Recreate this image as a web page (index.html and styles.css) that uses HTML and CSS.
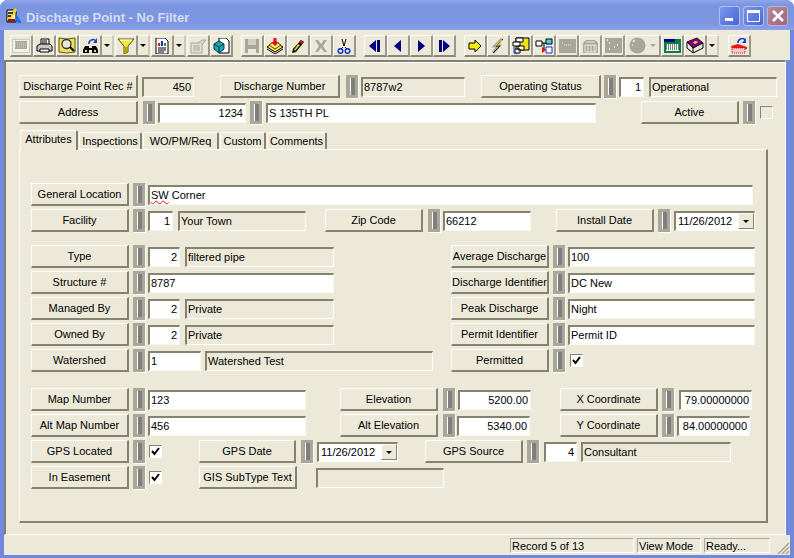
FILE: index.html
```html
<!DOCTYPE html>
<html>
<head>
  <title>Discharge Point - No Filter</title>
  <link rel="stylesheet" href="styles.css">
</head>
<body>
  <div class="window">
    <div class="titlebar">
      <svg class="app-icon" width="18" height="18" viewBox="0 0 18 18">
        <path d="M2 3h9v12H2z" fill="#f4f0c8" stroke="#000"/>
        <path d="M3 13L11 2" stroke="#e8d820" stroke-width="3"/>
        <path d="M3 6h5M3 9h3" stroke="#000" stroke-width="1.5"/>
        <path d="M3 12h7v3H3z" fill="#8c1c1c"/>
        <path d="M11 8l5 8M11 11l3 5" stroke="#1c70f0" stroke-width="1.6" fill="none"/>
      </svg>
      <span class="title-text">Discharge Point - No Filter</span>
      <div class="title-buttons">
        <div class="caption-btn"><span class="min-glyph"></span></div>
        <div class="caption-btn"><span class="max-glyph"></span></div>
        <div class="caption-btn caption-close">
          <svg width="14" height="14" viewBox="0 0 14 14"><path d="M2 2l10 10M12 2L2 12" stroke="#fff" stroke-width="2.6"/></svg>
        </div>
      </div>
    </div>

    <div class="toolbar">
      <div class="tb"><svg width="18" height="16" viewBox="0 0 18 16"><rect x="0.500" y="1.500" width="17" height="13" fill="#f4f2e6" stroke="#a8a698" stroke-dasharray="1 1"/><rect x="3" y="3" width="12" height="8" fill="#a8a698"/><path d="M3 5h12M3 7h12M3 9h12" stroke="#d8d6c8" stroke-dasharray="1 1"/></svg></div>
      <div class="tb"><svg width="17" height="16" viewBox="0 0 17 16"><path d="M5 1h8v6H5z" fill="#fff" stroke="#000"/><path d="M1 8l3-2h10l2 2v5H1z" fill="#c8c8c0" stroke="#000"/><path d="M4 11h9v3H4z" fill="#fff" stroke="#000"/><path d="M6 3h5M6 5h5" stroke="#000"/></svg></div>
      <div class="tb"><svg width="18" height="17" viewBox="0 0 18 17"><path d="M1 1l8 1 8-1v14l-8 1-8-1z" fill="#f0e060" stroke="#605800"/><circle cx="8.500" cy="7" r="4.500" fill="#e8e8dc" stroke="#303030" stroke-width="1.300"/><path d="M12 10l4 4" stroke="#000" stroke-width="2"/></svg></div>
      <div class="tb"><svg width="17" height="16" viewBox="0 0 17 16"><path d="M3 8h4v7H1v-3zM10 8h4l2 4v3h-6z" fill="#000"/><path d="M7 10h3v2H7z" fill="#000"/><path d="M3 12h2v2H3zM12 12h2v2h-2z" fill="#f0e060"/><path d="M7 6a4 4 0 0 1 7-3" stroke="#2040c0" stroke-width="1.6" fill="none"/><path d="M15 0v5h-4z" fill="#2040c0"/></svg></div>
      <div class="tb-arrow"><span class="caret"></span></div>
      <div class="tb tb-after"><svg width="18" height="16" viewBox="0 0 18 16"><path d="M1 1h16l-6 7v6l-4 2V8z" fill="#f4e840" stroke="#605800"/><path d="M3 2h12" stroke="#fff"/><path d="M8 9h2v5H8z" fill="#b0a000"/></svg></div>
      <div class="tb-arrow"><span class="caret"></span></div>
      <div class="tb tb-after"><svg width="16" height="16" viewBox="0 0 16 16"><path d="M2 0h9l3 3v13H2z" fill="#fff" stroke="#000"/><path d="M4 5h2v3H4z" fill="#e01010"/><path d="M7 3h2v5H7z" fill="#1030d0"/><path d="M10 5h2v3h-2z" fill="#10a030"/><path d="M4 10h8M4 12h8M4 14h6" stroke="#000"/></svg></div>
      <div class="tb-arrow"><span class="caret"></span></div>
      <div class="tb tb-after"><svg width="17" height="16" viewBox="0 0 17 16"><path d="M1 5h11v10H1z" fill="#e4e2d4" stroke="#a8a698"/><path d="M3 8h7M3 10h7M3 12h7" stroke="#a8a698"/><path d="M8 5l4-3h4l-4 5" fill="#d4d2c4" stroke="#a8a698"/></svg></div>
      <div class="tb"><svg width="17" height="16" viewBox="0 0 17 16"><path d="M6 0h7l3 3v12H6z" fill="#fff" stroke="#000"/><path d="M1 6l5-3 5 3v5l-5 4-5-4z" fill="#18a8b8" stroke="#003840"/><path d="M1 6l5 3 5-3M6 9v6" stroke="#003840" fill="none"/></svg></div>

      <div class="tb tb-group"><svg width="16" height="16" viewBox="0 0 16 16"><path d="M1 1h14v14H1z" fill="#a8a698"/><path d="M4 1h8v6H4z" fill="#d0cec0"/><path d="M4 11h8v4H4z" fill="#eceada"/></svg></div>
      <div class="tb"><svg width="18" height="16" viewBox="0 0 18 16"><path d="M1 9l8-5 8 5-8 5z" fill="#f4e840" stroke="#000"/><path d="M1 11l8 5 8-5" fill="none" stroke="#000"/><path d="M3 7l6-4 6 4-6 4z" fill="#f8ec70" stroke="#604000"/><path d="M7.5 0h3v4H13L9 8 5 4h2.500z" fill="#e01010"/></svg></div>
      <div class="tb"><svg width="16" height="16" viewBox="0 0 16 16"><path d="M11 2l3 2-8 10-4 1 1-4z" fill="#000"/><path d="M11 2l3 2-2 2-3-2z" fill="#c02020"/><path d="M8 6l2 1-5 6-1-1z" fill="#f0c820"/></svg></div>
      <div class="tb"><svg width="16" height="16" viewBox="0 0 16 16"><path d="M2 2h3l3 4 3-4h3l-4 6 4 6h-3l-3-4-3 4H2l4-6z" fill="#a8a698"/></svg></div>
      <div class="tb"><svg width="16" height="16" viewBox="0 0 16 16"><path d="M6 1l2 7 2-7M7 9L5 11M9 9l2 2" stroke="#000" fill="none"/><circle cx="4.500" cy="13" r="2.300" fill="none" stroke="#1030c0" stroke-width="1.400"/><circle cx="11.500" cy="13" r="2.300" fill="none" stroke="#1030c0" stroke-width="1.400"/></svg></div>

      <div class="tb tb-group"><svg width="16" height="16" viewBox="0 0 16 16"><path d="M9 2v12L2 8z" fill="#000080"/><path d="M10 2h3v12h-3z" fill="#000080"/></svg></div>
      <div class="tb"><svg width="16" height="16" viewBox="0 0 16 16"><path d="M11 2v12L4 8z" fill="#000080"/></svg></div>
      <div class="tb"><svg width="16" height="16" viewBox="0 0 16 16"><path d="M5 2v12l7-6z" fill="#000080"/></svg></div>
      <div class="tb"><svg width="16" height="16" viewBox="0 0 16 16"><path d="M3 2h3v12H3z" fill="#000080"/><path d="M7 2v12l7-6z" fill="#000080"/></svg></div>

      <div class="tb tb-group"><svg width="16" height="16" viewBox="0 0 16 16"><path d="M2 5h6V2l6 6-6 6v-3H2z" fill="#f8f000" stroke="#000"/></svg></div>
      <div class="tb"><svg width="16" height="16" viewBox="0 0 16 16"><path d="M12 1L5 8h4l-6 7" fill="none" stroke="#a8a698" stroke-width="3"/><path d="M13 1L6 8h4l-7 7" fill="none" stroke="#000" stroke-width="1"/><path d="M12 2L6 7h3" fill="none" stroke="#f0e000"/></svg></div>
      <div class="tb"><svg width="18" height="18" viewBox="0 0 18 18"><path d="M4 1h13v12H4z" fill="#f0e020" stroke="#000"/><path d="M4 1h7v4H4z" fill="#fff" stroke="#000"/><path d="M1 5h7v4H1zM6 9h6v4H6zM3 12h5v4H3z" fill="#fff" stroke="#000"/><path d="M2 10v6l3 1" fill="none" stroke="#2040c0"/></svg></div>
      <div class="tb"><svg width="18" height="16" viewBox="0 0 18 16"><path d="M1 3h6v5H1z" fill="#fff" stroke="#000"/><path d="M11 1h6v5h-6z" fill="#40d8e0" stroke="#000"/><path d="M11 9h6v6h-6z" fill="#fff" stroke="#1030d0"/><path d="M7 5h4M9 5v7" stroke="#000"/><path d="M7 9v6l4-3z" fill="#e01010"/></svg></div>
      <div class="tb"><svg width="17" height="14" viewBox="0 0 17 14"><path d="M0 0h17v14H0z" fill="#a8a698"/><path d="M3 4h2M5 6h8" stroke="#eceada" stroke-dasharray="1 1"/></svg></div>
      <div class="tb"><svg width="17" height="16" viewBox="0 0 17 16"><path d="M1 5l3-3h9l3 3v10H1z" fill="#a8a698"/><path d="M4 4h9" stroke="#eceada"/><path d="M3 7h11v7H3z" fill="none" stroke="#eceada"/><path d="M6 7v7M9 7v7M12 7v7" stroke="#eceada"/></svg></div>
      <div class="tb"><svg width="17" height="15" viewBox="0 0 17 15"><path d="M0 0h17v15H0z" fill="#a8a698"/><path d="M2 2h2M4 5h2M9 9h2M4 11h2M12 7h2" stroke="#eceada" stroke-width="2" stroke-dasharray="1 1"/></svg></div>
      <div class="tb tb-wide"><svg width="17" height="17" viewBox="0 0 17 17"><circle cx="8.500" cy="8.500" r="8" fill="#a8a698"/><path d="M4 5l2-2M3 8h1" stroke="#eceada" stroke-width="1.500"/></svg><span class="caret caret-off"></span></div>
      <div class="tb"><svg width="17" height="14" viewBox="0 0 17 14"><path d="M0 0h17v14H0z" fill="#008040"/><path d="M0 0h11v3H0z" fill="#000080"/><path d="M2 5h13v7H2z" fill="#fff"/><path d="M2 6h13M2 8h13M2 10h13" stroke="#000" stroke-dasharray="1 1"/></svg></div>
      <div class="tb"><svg width="18" height="17" viewBox="0 0 18 17"><path d="M1 5l10-4 6 5-10 5z" fill="#800080" stroke="#300030"/><path d="M1 5v6l6 5 10-5V6l-10 5z" fill="#e8e8e0" stroke="#000"/><path d="M7 11v5" stroke="#000"/><path d="M7 5l3-1 2 1-3 2z" fill="#f8e820"/></svg></div>
      <div class="tb-arrow"><span class="caret"></span></div>
      <div class="tb tb-last"><svg width="18" height="16" viewBox="0 0 18 16"><path d="M1 8l7-2 9 3v2H2z" fill="#e81818"/><path d="M2 10h13v5H2z" fill="#f8c8c8" stroke="#c01010" stroke-dasharray="1 1"/><path d="M8 5a4 4 0 0 1 7-3" fill="none" stroke="#1040d0" stroke-width="1.500"/><path d="M16 0v5h-4z" fill="#1040d0"/></svg></div>
    </div>

    <div class="panel">
      <div class="row">
        <div class="btn w119">Discharge Point Rec #</div>
        <div class="field ro right ml4 w52">450</div>
        <div class="btn ml26 w120">Discharge Number</div>
        <div class="seam ml6"></div>
        <div class="field ro ml3 w104">8787w2</div>
        <div class="btn ml16 w120">Operating Status</div>
        <div class="seam ml3"></div>
        <div class="field right ml3 w25">1</div>
        <div class="field ro ml5 w128">Operational</div>
      </div>
      <div class="row">
        <div class="btn w119">Address</div>
        <div class="seam ml5"></div>
        <div class="field right ml3 w88">1234</div>
        <div class="seam ml4"></div>
        <div class="field ml4 w330">S 135TH PL</div>
        <div class="btn ml45 w98">Active</div>
        <div class="seam ml4"></div>
        <div class="check ml5"></div>
      </div>

      <div class="tabs">
        <div class="tab tab-active w58">Attributes</div>
        <div class="tab w63">Inspections</div>
        <div class="tab w76">WO/PM/Req</div>
        <div class="tab w46">Custom</div>
        <div class="tab w60">Comments</div>
      </div>

      <div class="tab-pane">
        <div class="row">
          <div class="btn w98">General Location</div>
          <div class="seam ml4"></div>
          <div class="field ml3 w605"><span class="misspelled">SW</span> Corner</div>
        </div>
        <div class="row">
          <div class="btn w98">Facility</div>
          <div class="seam ml4"></div>
          <div class="field right ml3 w25">1</div>
          <div class="field ro ml5 w128">Your Town</div>
          <div class="btn ml19 w98">Zip Code</div>
          <div class="seam ml5"></div>
          <div class="field ml3 w88">66212</div>
          <div class="btn ml25 w98">Install Date</div>
          <div class="seam ml4"></div>
          <div class="date ml4"><span>11/26/2012</span><span class="date-btn"><span class="caret"></span></span></div>
        </div>

        <div class="row group">
          <div class="btn w98">Type</div>
          <div class="seam ml4"></div>
          <div class="field right ml3 w32">2</div>
          <div class="field ro ml5 w149">filtered pipe</div>
          <div class="btn ml117 w98">Average Discharge</div>
          <div class="seam ml4"></div>
          <div class="field ml3 w187">100</div>
        </div>
        <div class="row">
          <div class="btn w98">Structure #</div>
          <div class="seam ml4"></div>
          <div class="field ml3 w186">8787</div>
          <div class="btn ml117 w98">Discharge Identifier</div>
          <div class="seam ml4"></div>
          <div class="field ml3 w187">DC New</div>
        </div>
        <div class="row">
          <div class="btn w98">Managed By</div>
          <div class="seam ml4"></div>
          <div class="field right ml3 w32">2</div>
          <div class="field ro ml5 w149">Private</div>
          <div class="btn ml117 w98">Peak Discharge</div>
          <div class="seam ml4"></div>
          <div class="field ml3 w187">Night</div>
        </div>
        <div class="row">
          <div class="btn w98">Owned By</div>
          <div class="seam ml4"></div>
          <div class="field right ml3 w32">2</div>
          <div class="field ro ml5 w149">Private</div>
          <div class="btn ml117 w98">Permit Identifier</div>
          <div class="seam ml4"></div>
          <div class="field ml3 w187">Permit ID</div>
        </div>
        <div class="row">
          <div class="btn w98">Watershed</div>
          <div class="seam ml4"></div>
          <div class="field ml3 w53">1</div>
          <div class="field ro ml4 w228">Watershed Test</div>
          <div class="btn ml18 w98">Permitted</div>
          <div class="seam ml4"></div>
          <div class="check checked ml5"><svg width="9" height="9" viewBox="0 0 9 9"><path d="M1 4l2.500 3L8 1" fill="none" stroke="#000" stroke-width="2"/></svg></div>
        </div>

        <div class="row group-wide">
          <div class="btn w98">Map Number</div>
          <div class="seam ml4"></div>
          <div class="field ml3 w158">123</div>
          <div class="btn ml34 w98">Elevation</div>
          <div class="seam ml5"></div>
          <div class="field right ml3 w73">5200.00</div>
          <div class="btn ml29 w98">X Coordinate</div>
          <div class="seam ml4"></div>
          <div class="field right ml5 w73">79.00000000</div>
        </div>
        <div class="row">
          <div class="btn w98">Alt Map Number</div>
          <div class="seam ml4"></div>
          <div class="field ml3 w158">456</div>
          <div class="btn ml34 w98">Alt Elevation</div>
          <div class="seam ml5"></div>
          <div class="field right ml2 w73">5340.00</div>
          <div class="btn ml30 w98">Y Coordinate</div>
          <div class="seam ml4"></div>
          <div class="field right ml3 w73">84.00000000</div>
        </div>
        <div class="row">
          <div class="btn w98">GPS Located</div>
          <div class="seam ml4"></div>
          <div class="check checked ml4"><svg width="9" height="9" viewBox="0 0 9 9"><path d="M1 4l2.500 3L8 1" fill="none" stroke="#000" stroke-width="2"/></svg></div>
          <div class="btn ml37 w97">GPS Date</div>
          <div class="seam ml5"></div>
          <div class="date ml4"><span>11/26/2012</span><span class="date-btn"><span class="caret"></span></span></div>
          <div class="btn ml27 w98">GPS Source</div>
          <div class="seam ml4"></div>
          <div class="field right ml5 w33">4</div>
          <div class="field ro ml4 w150">Consultant</div>
        </div>
        <div class="row">
          <div class="btn w98">In Easement</div>
          <div class="seam ml4"></div>
          <div class="check checked ml4"><svg width="9" height="9" viewBox="0 0 9 9"><path d="M1 4l2.500 3L8 1" fill="none" stroke="#000" stroke-width="2"/></svg></div>
          <div class="btn ml37 w98">GIS SubType Text</div>
          <div class="field ro ml19 w128"></div>
        </div>
      </div>
    </div>

    <div class="statusbar">
      <div class="pane w124">Record 5 of 13</div>
      <div class="pane w64">View Mode</div>
      <div class="pane w66">Ready...</div>
      <svg class="grip" width="14" height="14" viewBox="0 0 14 14"><path d="M13 2L2 13M13 6l-7 7M13 10l-3 3" stroke="#a8a698" stroke-width="1.500"/></svg>
    </div>
  </div>
</body>
</html>
```

FILE: styles.css
```css
/* Janela */
body {
  margin: 0;
  background-color: #fff;
  font-family: "Liberation Sans", Arial, sans-serif;
  font-size: 11px;
  color: #000;
}

.window {
  width: 794px;
  height: 558px;
  box-sizing: border-box;
  padding: 0 4px 3px;
  background-color: #7089dc;
  border-radius: 8px 8px 0 0;
  overflow: hidden;
  display: flex;
  flex-direction: column;
}

.titlebar {
  height: 30px;
  margin: 0 -4px;
  padding: 0 6px 0 5px;
  display: flex;
  align-items: center;
  flex: none;
  background: linear-gradient(#8fa6ea 0, #7b95e0 5px, #7c96e2 24px, #8ba2e6 30px);
}

.app-icon {
  margin-top: 1px;
}

.title-text {
  margin-left: 3px;
  margin-top: 4px;
  font-size: 13px;
  font-weight: bold;
  color: #d4dcf6;
}

.title-buttons {
  margin-left: auto;
  margin-top: 1px;
  display: flex;
  gap: 3px;
}

.caption-btn {
  width: 21px;
  height: 20px;
  box-sizing: border-box;
  border: 1px solid #b0c0f0;
  border-radius: 3px;
  background: linear-gradient(135deg, #7a98ea, #4666d8);
  display: flex;
  align-items: center;
  justify-content: center;
}

.caption-close {
  background: linear-gradient(135deg, #b08a9e, #a4647a);
  border-color: #c8b0c8;
}

.min-glyph {
  width: 8px;
  height: 3px;
  margin-top: 8px;
  margin-right: 2px;
  background-color: #fff;
}

.max-glyph {
  width: 13px;
  height: 12px;
  box-sizing: border-box;
  border: 1px solid #fff;
  border-top-width: 3px;
}

/* Barra de ferramentas */
.toolbar {
  height: 30px;
  box-sizing: border-box;
  padding: 5px 0 0 6px;
  background-color: #ece9d8;
  display: flex;
  align-items: flex-start;
  flex: none;
}

.tb {
  width: 23px;
  height: 22px;
  box-sizing: border-box;
  background-color: #ece9d8;
  border-top: 1px solid #fff;
  border-left: 1px solid #fff;
  border-right: 2px solid #9a988a;
  border-bottom: 2px solid #8a887a;
  display: flex;
  align-items: center;
  justify-content: center;
  flex: none;
}

.tb-wide {
  width: 36px;
  gap: 4px;
}

.tb-arrow {
  width: 12px;
  height: 22px;
  box-sizing: border-box;
  border-right: 2px solid #cfccbc;
  border-bottom: 2px solid #8a887a;
  border-top: 1px solid #fff;
  display: flex;
  align-items: center;
  justify-content: center;
  flex: none;
}

.tb-after {
  margin-left: 1px;
}

.tb-group {
  margin-left: 8px;
}

.tb-last {
  margin-left: 9px;
}

.caret {
  width: 0;
  height: 0;
  border-left: 3px solid transparent;
  border-right: 3px solid transparent;
  border-top: 3px solid #000;
}

.caret-off {
  border-top-color: #a8a698;
}

/* Painel principal */
.panel {
  width: 782px;
  height: 475px;
  box-sizing: border-box;
  padding: 13px 0 0 13px;
  background-color: #ece9d8;
  border-top: 2px solid #817f72;
  border-left: 2px solid #817f72;
  border-right: 1px solid #fff;
  border-bottom: 1px solid #fff;
  box-shadow: inset 0 1px 0 #fff;
  flex: none;
}

.row {
  height: 23px;
  margin-bottom: 3px;
  display: flex;
  align-items: center;
}

.group {
  margin-top: 13px;
}

.group-wide {
  margin-top: 16px;
}

.btn {
  height: 23px;
  box-sizing: border-box;
  flex: none;
  background-color: #ece9d8;
  border-top: 1px solid #fff;
  border-left: 1px solid #fff;
  border-right: 2px solid #85836f;
  border-bottom: 2px solid #85836f;
  text-align: center;
  line-height: 20px;
  white-space: nowrap;
}

.seam {
  width: 12px;
  height: 23px;
  box-sizing: border-box;
  flex: none;
  background-color: #7f7f7f;
  border-style: solid;
  border-width: 3px 3px 3px 4px;
  border-color: #a9a797;
  box-shadow: inset 1px 0 0 #fff, 1px 1px 0 #fff;
}

.field {
  height: 20px;
  box-sizing: border-box;
  flex: none;
  padding: 0 2px 0 1px;
  background-color: #fff;
  border-top: 2px solid #85836f;
  border-left: 2px solid #85836f;
  border-right: 1px solid #f8f8f0;
  border-bottom: 1px solid #f8f8f0;
  line-height: 17px;
  white-space: nowrap;
  overflow: hidden;
}

.ro {
  background-color: #ece9d8;
  border-right-color: #fff;
  border-bottom-color: #fff;
}

.right {
  text-align: right;
}

.misspelled {
  text-decoration: underline wavy #e01010 1px;
}

.check {
  width: 13px;
  height: 13px;
  box-sizing: border-box;
  flex: none;
  background-color: #ece9d8;
  border-top: 1px solid #85836f;
  border-left: 1px solid #85836f;
  border-right: 1px solid #fff;
  border-bottom: 1px solid #fff;
  display: flex;
  align-items: center;
  justify-content: center;
}

.checked {
  background-color: #fff;
}

.date {
  width: 81px;
  height: 20px;
  box-sizing: border-box;
  flex: none;
  padding-left: 2px;
  background-color: #fff;
  border-top: 2px solid #85836f;
  border-left: 2px solid #85836f;
  border-right: 1px solid #fff;
  border-bottom: 1px solid #fff;
  display: flex;
  align-items: center;
  justify-content: space-between;
}

.date-btn {
  width: 16px;
  height: 16px;
  box-sizing: border-box;
  background-color: #ece9d8;
  border-top: 1px solid #fff;
  border-left: 1px solid #fff;
  border-right: 1px solid #85836f;
  border-bottom: 1px solid #85836f;
  display: flex;
  align-items: center;
  justify-content: center;
}

/* Abas */
.tabs {
  height: 20px;
  margin-top: 6px;
  margin-bottom: -1px;
  padding-left: 1px;
  display: flex;
  align-items: flex-end;
  gap: 1px;
  position: relative;
  z-index: 1;
}

.tab {
  height: 17px;
  margin-bottom: 1px;
  box-sizing: border-box;
  flex: none;
  background-color: #ece9d8;
  border-top: 1px solid #fff;
  border-left: 1px solid #fff;
  border-right: 2px solid #85836f;
  border-radius: 2px 2px 0 0;
  text-align: center;
  line-height: 17px;
}

.tab-active {
  height: 20px;
  margin-bottom: 0;
  line-height: 17px;
}

.tab-pane {
  width: 749px;
  height: 374px;
  box-sizing: border-box;
  padding: 33px 0 0 11px;
  border-top: 1px solid #fff;
  border-left: 1px solid #fff;
  border-right: 2px solid #85836f;
  border-bottom: 2px solid #85836f;
}

/* Barra de status */
.statusbar {
  height: 20px;
  box-sizing: border-box;
  padding: 3px 0 2px 506px;
  background-color: #ece9d8;
  display: flex;
  gap: 3px;
  position: relative;
  flex: none;
}

.pane {
  height: 15px;
  box-sizing: border-box;
  padding-left: 1px;
  border-top: 1px solid #a8a698;
  border-left: 1px solid #a8a698;
  border-right: 1px solid #fff;
  border-bottom: 1px solid #fff;
  line-height: 14px;
}

.grip {
  position: absolute;
  right: 0;
  bottom: 0;
}

/* Larguras e margens dos campos */
.w25 { width: 25px; }
.w32 { width: 32px; }
.w33 { width: 33px; }
.w46 { width: 46px; }
.w52 { width: 52px; }
.w53 { width: 53px; }
.w58 { width: 58px; }
.w60 { width: 60px; }
.w63 { width: 63px; }
.w64 { width: 64px; }
.w66 { width: 66px; }
.w73 { width: 73px; }
.w76 { width: 76px; }
.w88 { width: 88px; }
.w97 { width: 97px; }
.w98 { width: 98px; }
.w104 { width: 104px; }
.w119 { width: 119px; }
.w120 { width: 120px; }
.w124 { width: 124px; }
.w128 { width: 128px; }
.w149 { width: 149px; }
.w150 { width: 150px; }
.w158 { width: 158px; }
.w186 { width: 186px; }
.w187 { width: 187px; }
.w228 { width: 228px; }
.w330 { width: 330px; }
.w605 { width: 605px; }

.ml2 { margin-left: 2px; }
.ml3 { margin-left: 3px; }
.ml4 { margin-left: 4px; }
.ml5 { margin-left: 5px; }
.ml6 { margin-left: 6px; }
.ml16 { margin-left: 16px; }
.ml18 { margin-left: 18px; }
.ml19 { margin-left: 19px; }
.ml25 { margin-left: 25px; }
.ml26 { margin-left: 26px; }
.ml27 { margin-left: 27px; }
.ml29 { margin-left: 29px; }
.ml30 { margin-left: 30px; }
.ml34 { margin-left: 34px; }
.ml37 { margin-left: 37px; }
.ml45 { margin-left: 45px; }
.ml117 { margin-left: 117px; }
```
